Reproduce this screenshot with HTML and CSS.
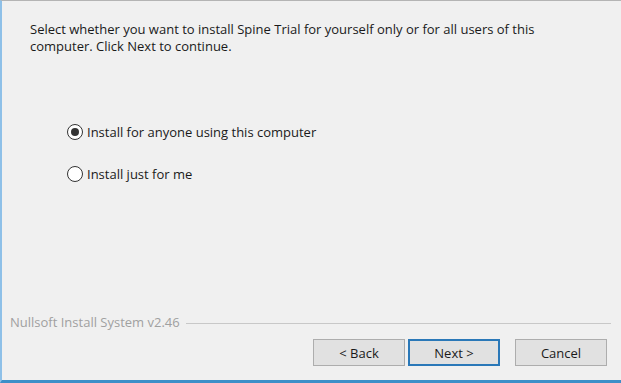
FILE: index.html
```html
<!DOCTYPE html>
<html>
<head>
    <title>Spine Trial Setup</title>
    <link rel="stylesheet" href="styles.css">
</head>
<body>
    <div class="window">
        <div class="page">
            <p class="intro">Select whether you want to install Spine Trial for yourself only or for all users of this computer. Click Next to continue.</p>

            <div class="options">
                <label class="option">
                    <span class="radio checked"></span>
                    Install for anyone using this computer
                </label>
                <label class="option">
                    <span class="radio"></span>
                    Install just for me
                </label>
            </div>
        </div>

        <div class="branding">
            <span>Nullsoft Install System v2.46</span>
            <span class="rule"></span>
        </div>

        <div class="buttons">
            <button class="btn">&lt; Back</button>
            <button class="btn default">Next &gt;</button>
            <button class="btn cancel">Cancel</button>
        </div>
    </div>
</body>
</html>
```

FILE: styles.css
```css
body {
    margin: 0;
    padding: 0;
    font-family: "Open Sans", "Noto Sans", sans-serif;
    font-size: 13px;
    color: #1a1a1a;
    background-color: #f0f0f0;
}

.window {
    width: 621px;
    height: 383px;
    box-sizing: border-box;
    border-top: 1px solid #b4b4b4;
    border-left: 2px solid #8ec0e8;
    border-bottom: 3px solid #3d8fc8;
    background-color: #f0f0f0;
    display: flex;
    flex-direction: column;
}

.page {
    flex: 1;
    padding: 20px 20px 0 28px;
}

.intro {
    margin: 0;
    width: 540px;
    line-height: 17px;
}

.options {
    display: flex;
    flex-direction: column;
    gap: 24px;
    margin-top: 68px;
    margin-left: 37px;
}

.option {
    display: flex;
    align-items: center;
    gap: 4px;
    height: 18px;
}

.radio {
    width: 14px;
    height: 14px;
    border: 1px solid #333;
    border-radius: 50%;
    background-color: #fff;
    position: relative;
}

.radio.checked::after {
    content: "";
    position: absolute;
    left: 3px;
    top: 3px;
    width: 8px;
    height: 8px;
    border-radius: 50%;
    background-color: #333;
}

.branding {
    display: flex;
    align-items: center;
    gap: 6px;
    padding: 0 10px 0 8px;
    color: #a0a0a0;
}

.rule {
    flex: 1;
    border-top: 1px solid #c8c8c8;
    margin-top: 2px;
}

.buttons {
    display: flex;
    justify-content: flex-end;
    gap: 3px;
    padding: 8px 14px 14px 0;
}

.btn {
    width: 92px;
    height: 27px;
    font-family: inherit;
    font-size: 13px;
    color: #1a1a1a;
    background-color: #e1e1e1;
    border: 1px solid #adadad;
    padding: 0;
}

.btn.default {
    border: 2px solid #2a78b8;
}

.btn.cancel {
    margin-left: 12px;
}
```
